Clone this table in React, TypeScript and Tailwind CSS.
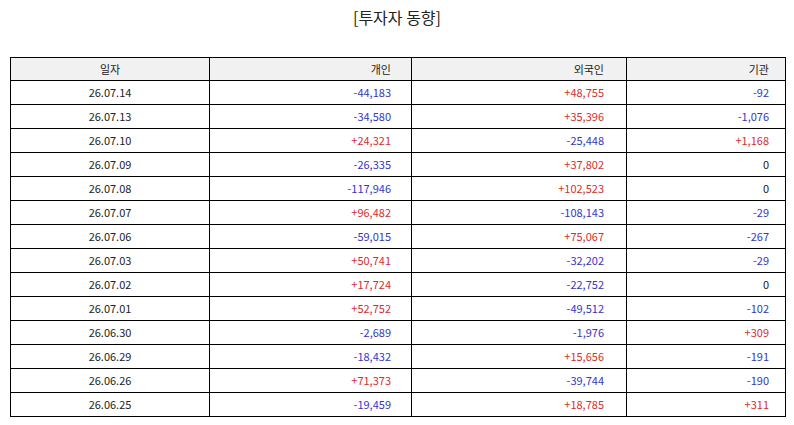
const rows: [string, string, string, string][] = [
  ['26.07.14', '-44,183', '+48,755', '-92'],
  ['26.07.13', '-34,580', '+35,396', '-1,076'],
  ['26.07.10', '+24,321', '-25,448', '+1,168'],
  ['26.07.09', '-26,335', '+37,802', '0'],
  ['26.07.08', '-117,946', '+102,523', '0'],
  ['26.07.07', '+96,482', '-108,143', '-29'],
  ['26.07.06', '-59,015', '+75,067', '-267'],
  ['26.07.03', '+50,741', '-32,202', '-29'],
  ['26.07.02', '+17,724', '-22,752', '0'],
  ['26.07.01', '+52,752', '-49,512', '-102'],
  ['26.06.30', '-2,689', '-1,976', '+309'],
  ['26.06.29', '-18,432', '+15,656', '-191'],
  ['26.06.26', '+71,373', '-39,744', '-190'],
  ['26.06.25', '-19,459', '+18,785', '+311'],
];

function tone(v: string) {
  if (v.startsWith('+')) return 'text-[#e22a2a]';
  if (v.startsWith('-')) return 'text-[#3434d0]';
  return 'text-[#222]';
}

function Row({ cells, head }: { cells: string[]; head?: boolean }) {
  const bg = head ? 'bg-[#f1f1f1]' : 'bg-white';
  const c = `flex items-center ${bg}`;
  return (
    <>
      <div className={`${c} justify-center`}>{cells[0]}</div>
      <div className={`${c} justify-end pr-[20px] ${head ? '' : tone(cells[1])}`}>{cells[1]}</div>
      <div className={`${c} justify-end pr-[22px] ${head ? '' : tone(cells[2])}`}>{cells[2]}</div>
      <div className={`${c} justify-end pr-[16px] ${head ? '' : tone(cells[3])}`}>{cells[3]}</div>
    </>
  );
}

export default function App() {
  return (
    <div className="w-[794px] h-[425px] bg-white font-['Noto_Sans_CJK_KR','Noto_Sans',sans-serif] text-[#222]">
      <h1 className="pt-[5px] text-center text-[16px] leading-[24px]">[투자자 동향]</h1>
      <div className="ml-[10px] mt-[28px] grid w-[776px] grid-cols-[198px_201px_214px_158px] grid-rows-[22px_repeat(14,23px)] gap-px border border-black bg-black text-[11px]">
        <Row head cells={['일자', '개인', '외국인', '기관']} />
        {rows.map((r) => (
          <Row key={r[0]} cells={r} />
        ))}
      </div>
    </div>
  );
}
